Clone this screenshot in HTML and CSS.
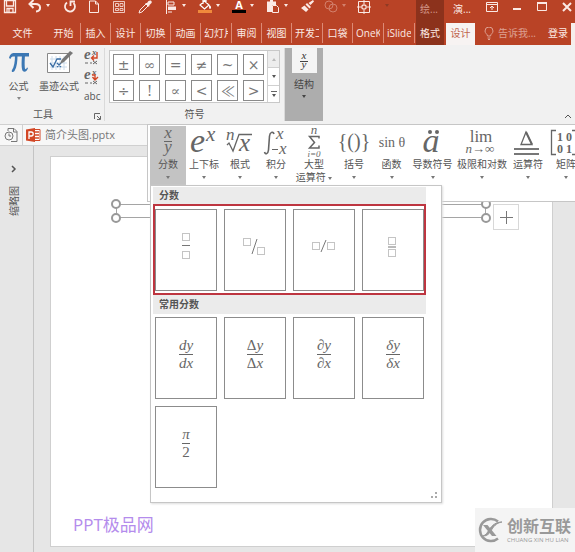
FILE: index.html
```html
<!DOCTYPE html>
<html lang="zh-CN">
<head>
<meta charset="utf-8">
<meta name="viewport" content="width=device-width">
<title>简介头图.pptx</title>
<link rel="stylesheet" href="styles.css">
</head>
<body>
<div class="app">
  <header class="top">
    <div class="quick">
      <button class="q save" aria-label="保存"><svg width="14" height="14" viewBox="0 0 14 14"><path d="M1.500 .5h11v12h-11zM3.500 1v5h7V1M4 12.500v-4h6v4M6 9v3" fill="none" stroke="currentColor" stroke-width="1.300"/></svg></button>
      <button class="q undo" aria-label="撤消"><svg width="14" height="14" viewBox="0 0 14 14"><path d="M5.500 0 1.500 4l4 4M2 4h5.500c6 0 6 7 .5 7.500" fill="none" stroke="currentColor" stroke-width="2"/></svg><i class="caret"></i></button>
      <button class="q redo" aria-label="重复"><svg width="14" height="14" viewBox="0 0 14 14"><path d="M4 2.500a5 5 0 1 0 6.500.5M7.500 6V1.500H12" fill="none" stroke="currentColor" stroke-width="1.800"/></svg></button>
      <button class="q new" aria-label="新建"><svg width="14" height="14" viewBox="0 0 14 14"><path d="M2.500 1h6l3 3v8.500h-9zM8.500 1v3h3" fill="none" stroke="currentColor"/></svg></button>
      <button class="q grid" aria-label="网格"><svg width="14" height="14" viewBox="0 0 14 14"><path d="M1.500 1.500h11v11h-11zM3.500 3.500h3v3h-3zM8 3.500h3v3H8zM3.500 8.500h3v2h-3zM8 8.500h3v2H8z" fill="none" stroke="currentColor" stroke-width=".8"/></svg></button>
      <button class="q pick" aria-label="取色器"><svg width="14" height="14" viewBox="0 0 14 14"><path d="M1 13 2 10l6-6 2 2-6 6z" fill="none" stroke="currentColor"/><path d="m7 3 4 4 .5-2L13.500 3c1-2-1-3.500-3-2L9 3z" fill="currentColor"/></svg></button>
      <button class="q drop" aria-label="对齐"><svg width="14" height="14" viewBox="0 0 14 14"><path d="M2.500 0v14" stroke="currentColor"/><path d="M4 2h6v3H4z" fill="none" stroke="currentColor"/><path d="M4 6.500h8v3.500H4z" fill="currentColor"/><path d="M4 12h4" stroke="currentColor"/></svg><i class="caret"></i></button>
      <button class="q drop" aria-label="填充颜色"><svg width="14" height="14" viewBox="0 0 14 14"><path d="m6.500 1 4.500 4-4.500 4L2 5zM5 4V0h3v3" fill="none" stroke="#fff" stroke-width="1.200"/><path d="M11 5c3 1 2 4 1 4s-1-2-1-4" fill="#fff"/><path d="M0 10h14v3H0z" fill="#f08a3c"/></svg><i class="caret"></i></button>
      <button class="q drop" aria-label="字体颜色"><svg width="14" height="14" viewBox="0 0 14 14"><text x="7" y="9" text-anchor="middle" class="font-a">A</text><path d="M0 10h14v3H0z" fill="#000"/></svg><i class="caret"></i></button>
      <button class="q drop" aria-label="粘贴"><svg width="14" height="14" viewBox="0 0 14 14"><path d="M1 1.500h9V5H6v7H1z" fill="currentColor"/><path d="M4 0h3v2H4z" fill="currentColor"/><path d="M6.500 5.500h4l2 2v5h-6z" fill="#b94326" stroke="currentColor"/></svg><i class="caret"></i></button>
      <button class="q brush" aria-label="格式刷"><svg width="14" height="14" viewBox="0 0 14 14"><path d="m13 0 1 1.500L10.500 5 8.500 3zM7 3l4 4-1.500 1.500-4-4zM4.500 5.500 8.500 9.500 6 12 1 8z" fill="currentColor"/></svg></button>
      <button class="q shapes" disabled aria-label="合并形状"><svg width="14" height="14" viewBox="0 0 14 14"><circle cx="5" cy="5" r="4" fill="none" stroke="currentColor"/><circle cx="9" cy="8" r="4" fill="none" stroke="currentColor"/></svg><i class="caret"></i></button>
      <button class="q crop" aria-label="裁剪"><svg width="14" height="14" viewBox="0 0 14 14"><path d="M1.500 1.500h11v11h-11z" fill="none" stroke="currentColor"/><circle cx="7" cy="7" r="2.200" fill="none" stroke="currentColor" stroke-width="1.200"/><path d="M7 0v4M7 10v4M0 7h4M10 7h4" stroke="currentColor"/></svg></button>
      <button class="q more" aria-label="更多"><i class="caret dim"></i></button>
      <span class="context dark">绘...</span>
      <span class="context title">演...</span>
      <button class="w" aria-label="功能区显示选项"><svg width="12" height="12" viewBox="0 0 12 12"><path d="M.5 1.500h11v9H.5zM.5 3.500h11M6 9V5M4 7l2-2 2 2" fill="none" stroke="currentColor"/></svg></button>
      <button class="w" aria-label="最小化"><svg width="12" height="12" viewBox="0 0 12 12"><path d="M2 8h8" stroke="currentColor" stroke-width="2"/></svg></button>
      <button class="w" aria-label="最大化"><svg width="12" height="12" viewBox="0 0 12 12"><path d="M1.500 1.500h9v8h-9z" fill="none" stroke="currentColor"/><path d="M1 2h10" stroke="currentColor" stroke-width="2"/></svg></button>
      <button class="w" aria-label="关闭"><svg width="12" height="12" viewBox="0 0 12 12"><path d="m2 2 8 8M10 2l-8 8" stroke="currentColor" stroke-width="2"/></svg></button>
    </div>
    <nav class="tabs">
      <a href="#" class="file">文件</a>
      <a href="#" class="home">开始</a>
      <a href="#">插入</a>
      <a href="#">设计</a>
      <a href="#">切换</a>
      <a href="#">动画</a>
      <a href="#" class="cut"><span>幻灯片</span></a>
      <a href="#">审阅</a>
      <a href="#">视图</a>
      <a href="#" class="cut"><span>开发工具</span></a>
      <a href="#">口袋</a>
      <a href="#" class="cut"><span>OneKey</span></a>
      <a href="#" class="cut"><span>iSlide</span></a>
      <a href="#" class="format">格式</a>
      <a href="#" class="active">设计</a>
      <a href="#" class="tell"><svg width="10" height="13" viewBox="0 0 10 13"><path d="M3.500 9C3.500 7 1 6.500 1 4a4 4 0 0 1 8 0c0 2.500-2.500 3-2.500 5zM3.500 11h3M4 12.500h2" fill="none" stroke="currentColor"/></svg>告诉我...</a>
      <a href="#" class="login">登录</a>
      <span class="share"></span>
    </nav>
  </header>

  <section class="ribbon">
    <div class="group tools">
      <div class="body">
        <button class="big eq"><svg width="24" height="26" viewBox="0 0 24 26"><path d="M2 9c1-4 3-5 5-5h15v3.500H7C5 7.500 4 8 3.500 10z" fill="#3c78b4"/><path d="M8 6c0 7-1 12-3 15-1 2 1 3 2.500 1C10 18 10.500 12 10.500 6zM15 6c-.5 7-.5 11 0 14 .5 4 5 3.500 6-1l-1-.5c-1 2.500-2 2-2.200 0-.3-4-.1-8 .2-12.500z" fill="#3c78b4"/></svg><span>公式</span><i class="caret"></i></button>
        <button class="big ink"><svg width="30" height="26" viewBox="0 0 30 26"><path d="M3.500 4.500h22v19h-22z" fill="#fff" stroke="#888"/><path d="M8 7v14M12 7v14M16 7v14M20 7v14M6 10h17M6 14h17M6 18h17" stroke="#cbdcec"/><path d="m6 14 3 4 4-8h4M13 14l4 4M17 14l-4 4" fill="none" stroke="#3a6ea5" stroke-width="1.300"/><path d="m16 15 1.500-4L26 2l3 2-9 9z" fill="#777"/></svg><span>墨迹公式</span></button>
        <div class="mini">
          <button aria-label="专业型"><svg width="16" height="17" viewBox="0 0 16 17"><text x="0" y="11" class="mini-e">e</text><text x="8" y="7" class="mini-x">x</text><path d="M13 4v6H8M10 7.500 7.500 10l2.500 2.500" fill="none" stroke="#d24726" stroke-width="1.400"/><path d="M1 15h3M6 15h2M9 13l4 3M13 13l-4 3" stroke="#666"/></svg></button>
          <button aria-label="线性"><svg width="16" height="17" viewBox="0 0 16 17"><text x="0" y="11" class="mini-e">e</text><text x="8" y="7" class="mini-x">x</text><path d="M8 7h3v4M8.500 9l2.500 3 3-3" fill="none" stroke="#d24726" stroke-width="1.400"/><path d="M1 15h3M6 15h2M9 13l4 3M13 13l-4 3" stroke="#666"/></svg></button>
          <button class="abc">abc</button>
        </div>
      </div>
      <div class="name">工具<svg class="launch" width="7" height="7" viewBox="0 0 7 7"><path d="M.5 6V.5H6M3 3l3 3M6.500 3v3.500H3" fill="none" stroke="#666"/></svg></div>
    </div>
    <div class="group symbols">
      <div class="palette">
        <div class="cells">
          <button>±</button><button>∞</button><button>=</button><button>≠</button><button>~</button><button>×</button>
          <button>÷</button><button>!</button><button>∝</button><button>&lt;</button><button>≪</button><button>&gt;</button>
        </div>
        <div class="scroll">
          <button class="off" aria-label="上一行"><i class="caret up"></i></button>
          <button aria-label="下一行"><i class="caret"></i></button>
          <button class="all" aria-label="其他"><i class="caret"></i></button>
        </div>
      </div>
      <div class="name">符号</div>
    </div>
    <button class="structure"><span class="sample"><svg width="12" height="20" viewBox="0 0 12 20"><text x="6" y="8" text-anchor="middle" class="sx">x</text><path d="M2 10.500h8" stroke="#444"/><text x="6" y="17" text-anchor="middle" class="sx">y</text></svg></span><span>结构</span><i class="caret"></i></button>
    <button class="collapse" aria-label="折叠功能区"><svg width="8" height="6" viewBox="0 0 8 6"><path d="m1 5 3-3 3 3" fill="none" stroke="#555"/></svg></button>
  </section>

  <div class="docs">
    <span class="history"><svg width="14" height="15" viewBox="0 0 14 15"><path d="M4 3V.5h6l3 3V13.500H7" fill="none" stroke="#777"/><path d="M9.500 1v3H13" fill="none" stroke="#777"/><circle cx="5" cy="8" r="4" fill="#f4f4f4" stroke="#777"/><path d="M5 5.500V8h2" fill="none" stroke="#777"/></svg></span>
    <a href="#" class="doc"><svg width="15" height="14" viewBox="0 0 15 14"><path d="M8 1.500h6v11H8z" fill="#fff" stroke="#d24726"/><path d="M9 4h4M9 7h4M9 10h4" stroke="#d24726" stroke-width="1.500"/><path d="m0 1.500 9-1.500v14l-9-1.500z" fill="#d24726"/><path d="M3 11V4h2.200a2 2 0 0 1 0 4H3" fill="none" stroke="#fff" stroke-width="1.300"/></svg>简介头图.pptx</a>
  </div>

  <main class="work">
    <aside class="thumbs"><svg width="6" height="8" viewBox="0 0 6 8"><path d="m1 1 3 3-3 3" fill="none" stroke="#555" stroke-width="1.500"/></svg><span>缩略图</span></aside>
    <div class="stage">
      <div class="slide">
        <div class="shape"><i class="knob tl"></i><i class="knob tr"></i><i class="knob bl"></i><i class="knob br"></i></div>
        <button class="add" aria-label="布局选项"><svg width="13" height="13" viewBox="0 0 13 13"><path d="M6.500 0v13M0 6.500h13" stroke="#777"/></svg></button>
        <p class="brand">PPT极品网</p>
      </div>
    </div>
  </main>

  <div class="gallery">
    <button class="kind on"><svg width="36" height="31" viewBox="0 0 36 31"><text x="18" y="12" text-anchor="middle" class="m17">x</text><path d="M14 15.500h8" stroke="#666"/><text x="18" y="26" text-anchor="middle" class="m17">y</text></svg><span>分数</span><i class="caret"></i></button>
    <button class="kind"><svg width="36" height="31" viewBox="0 0 36 31"><text x="4" y="26" class="m34">e</text><text x="20" y="15" class="m20">x</text></svg><span>上下标</span><i class="caret"></i></button>
    <button class="kind"><svg width="36" height="31" viewBox="0 0 36 31"><text x="4" y="14" class="m17">n</text><path d="m5 19 2-2 4 8L17 8.500h13" fill="none" stroke="#666" stroke-width="1.300"/><text x="17" y="25" class="m26">x</text></svg><span>根式</span><i class="caret"></i></button>
    <button class="kind"><svg width="36" height="31" viewBox="0 0 36 31"><path d="M16 8c-1-3-4-2-4.500 2L10.500 24c-.5 4-3 5-4 2" fill="none" stroke="#666" stroke-width="1.600"/><text x="18" y="13" class="m17">x</text><path d="M14 23.500h6" stroke="#666"/><text x="21" y="28" class="m17">x</text></svg><span>积分</span><i class="caret"></i></button>
    <button class="kind w40 two"><svg width="36" height="31" viewBox="0 0 36 31"><text x="18" y="8" text-anchor="middle" class="m12">n</text><path d="M23 12.500V10.500H13.500l5 6-5 5.500H23v-2.500" fill="none" stroke="#666" stroke-width="1.500"/><text x="18" y="31" text-anchor="middle" class="m10">i=0</text></svg><span>大型</span><span>运算符 <i class="caret"></i></span></button>
    <button class="kind w40"><svg width="36" height="31" viewBox="0 0 36 31"><text x="18" y="22" text-anchor="middle" class="r20">{()}</text></svg><span>括号</span><i class="caret"></i></button>
    <button class="kind w35"><svg width="36" height="31" viewBox="0 0 36 31"><text x="18" y="21" text-anchor="middle" class="r14">sin θ</text></svg><span>函数</span><i class="caret"></i></button>
    <button class="kind w47"><svg width="36" height="31" viewBox="0 0 36 31"><text x="16" y="26" text-anchor="middle" class="m34">a</text><circle cx="15" cy="6" r="2" fill="#666"/><circle cx="22" cy="6" r="2" fill="#666"/></svg><span>导数符号</span><i class="caret"></i></button>
    <button class="kind w52"><svg width="36" height="31" viewBox="0 0 36 31"><text x="17" y="16" text-anchor="middle" class="r17">lim</text><text x="16" y="27" text-anchor="middle" class="m12">n→∞</text></svg><span>极限和对数</span><i class="caret"></i></button>
    <button class="kind w40"><svg width="36" height="31" viewBox="0 0 36 31"><path d="m16 6-5 12.500h11z" fill="none" stroke="#666" stroke-width="1.300"/><path d="m16 6 6 12.500" stroke="#666" stroke-width="2"/><path d="M4 23h25M4 28h25" stroke="#777" stroke-width="2"/></svg><span>运算符</span><i class="caret"></i></button>
    <button class="kind"><svg width="36" height="31" viewBox="0 0 36 31"><path d="M8 4.500H3.500v24H8M24 4.500h4v24h-4" fill="none" stroke="#666" stroke-width="1.300"/><text x="9" y="15" class="bits">1 0</text><text x="9" y="27" class="bits">0 1</text></svg><span>矩阵</span><i class="caret"></i></button>
  </div>

  <div class="menu">
    <h2>分数</h2>
    <div class="cards framed">
      <button aria-label="分数(竖式)"><svg width="30" height="30" viewBox="0 0 30 30"><path d="M11.500 2.500h7v7h-7zM11.500 20.500h7v7h-7z" class="slot"/><path d="M11 14.500h8" class="bar"/></svg></button>
      <button aria-label="分数(斜式)"><svg width="30" height="30" viewBox="0 0 30 30"><path d="M3.500 7.500h7v7h-7zM17.500 16.500h7v7h-7z" class="slot"/><path d="m17 8-5 15" class="bar"/></svg></button>
      <button aria-label="分数(横式)"><svg width="30" height="30" viewBox="0 0 30 30"><path d="M3.500 11.500h7v7h-7zM18.500 11.500h7v7h-7z" class="slot"/><path d="m17 9-5 12" class="bar"/></svg></button>
      <button aria-label="分数(小型)"><svg width="30" height="30" viewBox="0 0 30 30"><path d="M10.500 6.500h7v7h-7zM10.500 18.500h7v7h-7z" class="slot"/><path d="M10 16h8" class="bar"/></svg></button>
    </div>
    <h2>常用分数</h2>
    <div class="cards">
      <button><span class="frac"><span>dy</span><span>dx</span></span></button>
      <button><span class="frac"><span><b>Δ</b>y</span><span><b>Δ</b>x</span></span></button>
      <button><span class="frac"><span>∂y</span><span>∂x</span></span></button>
      <button><span class="frac"><span>δy</span><span>δx</span></span></button>
      <button><span class="frac"><span>π</span><span><b>2</b></span></span></button>
    </div>
    <svg class="grip" width="8" height="8" viewBox="0 0 8 8"><path d="M5 0h2v2H5zM1 4h2v2H1zM5 4h2v2H5z" fill="#aaa"/></svg>
  </div>

  <div class="mark">
    <svg width="26" height="26" viewBox="0 0 26 26"><path d="M21 4.500A11 11 0 1 0 21 21.500" fill="none" stroke="#999" stroke-width="2.500"/><path d="M6 8h4.500l9 11H15z" fill="#999"/><path d="M25 5c-6 1-9 5-11 9-2 3-4 5-8 5 3-1 4-3 6-6 3-5 7-8 13-8z" fill="#999" stroke="#999"/></svg>
    <div><strong>创新互联</strong><small>CHUANG XIN HU LIAN</small></div>
  </div>
</div>
</body>
</html>
```
FILE: styles.css
```css
* { box-sizing: border-box; }
body {
  margin: 0;
  color: #555;
  font: 11px/14px "Open Sans", "Noto Sans CJK SC", sans-serif;
}
button {
  margin: 0;
  padding: 0;
  border: 0;
  background: none;
  color: inherit;
  font: inherit;
}
a { color: inherit; text-decoration: none; }
svg { display: block; flex: none; }
.app {
  position: relative;
  display: flex;
  flex-direction: column;
  min-height: 100vh;
  overflow: hidden;
}
.caret {
  display: inline-block;
  flex: none;
  border: 2px solid transparent;
  border-top: 3px solid currentColor;
  border-bottom: 0;
}
.caret.up { border-top: 0; border-bottom: 3px solid #bbb; }

/* title bar and tabs */
.top { background: #b94326; color: #fbe9e4; }
.quick { display: flex; height: 23px; }
.q, .w {
  display: flex;
  flex: none;
  align-items: flex-start;
  justify-content: center;
  width: 25px;
}
.q .caret { margin: 4px 0 0 4px; }
.save { width: 20px; }
.undo { width: 38px; }
.redo { width: 23px; }
.pick { width: 27px; }
.drop { width: 34px; }
.shapes { width: 32px; color: #d3806c; }
.more { width: 40px; }
.more .caret { margin-right: 22px; }
.dim { color: #8f3a24; }
.font-a { fill: #fff; font: bold 11px "Open Sans", sans-serif; }
.context { flex: none; width: 28px; padding: 2px 0 0 4px; white-space: nowrap; font-size: 10px; }
.dark { background: #8c321c; color: #d3988a; }
.title { width: 35px; flex: 1 0 35px; padding-left: 9px; }
.w { padding-top: 1px; }
.tabs { display: flex; height: 22px; overflow: hidden; font-size: 10px; line-height: 20px; }
.tabs a {
  flex: none;
  width: 30px;
  height: 20px;
  border-right: 1px solid #dc8a76;
  text-align: center;
  white-space: nowrap;
}
.tabs .cut { width: 31px; padding: 0 3px; text-align: left; }
.cut span { display: block; overflow: hidden; }
.tabs .file { width: 45px; border: 0; }
.tabs .home { width: 36px; padding-left: 2px; }
.tabs .format { width: 28px; height: 22px; margin-left: 1px; border: 0; background: #8c321c; }
.tabs .active { width: 29px; height: 22px; margin-left: 2px; border: 0; background: #f7f3f2; color: #c0654e; }
.tabs .tell {
  display: flex;
  flex: 1 0 68px;
  align-items: center;
  gap: 4px;
  padding-left: 9px;
  border: 0;
  color: #dda092;
}
.tabs .login { width: 26px; border: 0; }
.share { width: 4px; background: #f6eeec; }

/* ribbon */
.ribbon { position: relative; display: flex; height: 80px; padding: 3px 0; background: #f1f1f1; border-bottom: 1px solid #d0d0d0; font-size: 10px; }
.group { display: flex; flex-direction: column; justify-content: space-between; flex: none; }
.tools { width: 105px; border-right: 1px solid #dadada; }
.tools .body { display: flex; }
.big { display: flex; flex-direction: column; align-items: center; gap: 4px; height: 56px; }
.big svg { margin-top: 1px; }
.big span { line-height: 14px; white-space: nowrap; }
.big .caret { color: #888; }
.eq { width: 37px; }
.ink { width: 44px; }
.mini { display: flex; flex-direction: column; gap: 3px; margin-left: 3px; }
.mini .abc { line-height: 16px; }
.mini-e { font: italic bold 15px "Liberation Serif", serif; fill: #666; }
.mini-x { font: italic bold 9px "Liberation Serif", serif; fill: #666; }
.name { position: relative; padding-right: 18px; text-align: center; line-height: 14px; }
.launch { position: absolute; right: 3px; bottom: 1px; }
.symbols { width: 180px; padding: 2px 0 0 4px; border-right: 1px solid #dadada; }
.palette { display: flex; width: 171px; height: 53px; border: 1px solid #c8c8c8; background: #fff; }
.cells { display: grid; flex: 1; grid-template-columns: repeat(6, 21px); gap: 5px; padding: 3px; }
.cells button { height: 21px; border: 1px solid #8a8a8a; color: #777; font: 14px/18px "DejaVu Serif", serif; }
.scroll { display: flex; flex-direction: column; width: 13px; border-left: 1px solid #d0d0d0; }
.scroll button { display: flex; flex: 1; align-items: center; justify-content: center; }
.scroll button + button { border-top: 1px solid #d0d0d0; }
.scroll .off { background: #ededed; }
.scroll .all { flex-direction: column; gap: 2px; }
.all::before { width: 6px; height: 1px; background: #666; content: ""; }
.symbols .name { padding-right: 4px; }
.structure { display: flex; flex-direction: column; align-items: center; gap: 4px; width: 38px; height: 73px; background: #adadad; color: #444; }
.sample { display: flex; justify-content: center; width: 25px; height: 25px; padding-top: 3px; background: #f4f4f4; }
.sx { font: italic 11px "Liberation Serif", serif; fill: #333; }
.collapse { margin: auto 3px 2px auto; }

/* open documents */
.docs { display: flex; height: 21px; border-bottom: 1px solid #d0d0d0; background: #f7f7f7; }
.history { display: flex; align-items: center; justify-content: center; width: 23px; border-right: 1px solid #d0d0d0; }
.doc { display: flex; align-items: center; gap: 4px; padding-left: 3px; color: #777; }

/* workspace */
.work { display: flex; flex: 1; background: #e6e6e6; }
.thumbs { display: flex; flex-direction: column; align-items: center; gap: 13px; width: 34px; padding: 19px 6px 0 0; border-right: 1px solid #c4c4c4; }
.thumbs span { writing-mode: vertical-rl; text-orientation: sideways; transform: rotate(180deg); font-size: 10px; }
.stage { display: flex; flex: 1; padding: 10px 22px 5px 16px; }
.slide { position: relative; flex: 1; display: flex; flex-direction: column; justify-content: flex-end; border: 1px solid #cfcfcf; background: #fff; }
.shape { position: absolute; top: 47px; left: 65px; right: 66px; height: 14px; border: 1px solid #a5a5a5; }
.knob { position: absolute; width: 10px; height: 10px; border: 2px solid #999; border-radius: 50%; background: #fff; }
.tl, .bl { left: -6px; }
.tr, .br { right: -6px; }
.tl, .tr { top: -6px; }
.bl, .br { bottom: -6px; }
.add { position: absolute; top: 47px; right: 33px; display: grid; place-items: center; width: 26px; height: 26px; border: 1px solid #d8d8d8; background: #fff; }
.brand { margin: 0; padding: 0 0 8px 22px; color: #b48cec; font-size: 17px; line-height: 26px; }

/* structure gallery */
.gallery {
  position: absolute;
  top: 124px;
  left: 147px;
  right: 0;
  display: flex;
  height: 78px;
  padding: 1px 0 0 2px;
  overflow: hidden;
  border: 1px solid #c6c6c6;
  border-right: 0;
  background: #fff;
  font-size: 10px;
}
.kind { display: flex; flex: none; flex-direction: column; align-items: center; width: 36px; height: 60px; }
.kind span { line-height: 13px; white-space: nowrap; }
.kind svg { margin-bottom: 1px; overflow: visible; }
.kind > .caret { margin-top: 5px; color: #777; }
.kind span .caret { vertical-align: middle; color: #777; }
.on { background: #c3c3c3; }
.w35 { width: 35px; }
.w40 { width: 40px; }
.w47 { width: 47px; }
.w52 { width: 52px; }
.gallery text { fill: #666; }
.m10 { font: italic 9px "Liberation Serif", serif; }
.m12 { font: italic 13px "Liberation Serif", serif; }
.m17 { font: italic 17px "Liberation Serif", serif; }
.m20 { font: italic 21px "Liberation Serif", serif; }
.m26 { font: italic 25px "Liberation Serif", serif; }
.m34 { font: italic 34px "Liberation Serif", serif; }
.r14 { font: 14px "Liberation Serif", serif; }
.r17 { font: 17px "Liberation Serif", serif; }
.r20 { font: 20px "Liberation Serif", serif; }
.bits { font: bold 12px "Liberation Serif", serif; }

/* fraction menu */
.menu {
  position: absolute;
  top: 185px;
  left: 150px;
  width: 292px;
  padding: 1px 15px 14px 2px;
  border: 1px solid #c6c6c6;
  background: #fff;
  box-shadow: 1px 1px 2px #ddd;
}
.menu h2 { margin: 0; padding-left: 6px; background: #ebebeb; color: #555; font-size: 10px; font-weight: 700; line-height: 17px; }
.cards { display: grid; grid-template-columns: repeat(4, 62px); gap: 7px; padding: 3px 2px 0; }
.cards button { display: grid; place-items: center; height: 82px; padding-bottom: 8px; border: 1px solid #8c8c8c; background: #fff; }
.framed { padding: 3px 0 2px; border: 2px solid #bd3540; }
.framed + h2 { line-height: 19px; }
.slot { fill: none; stroke: #888; stroke-dasharray: 1 1; }
.bar { fill: none; stroke: #777; }
.frac { font: italic 15px/17px "Liberation Serif", serif; color: #666; }
.frac > span { display: block; }
.frac > span:first-child { border-bottom: 1px solid #666; }
.frac b { font-style: normal; font-weight: 400; }
.grip { position: absolute; right: 3px; bottom: 2px; }

/* corner logo */
.mark { position: absolute; right: 0; bottom: 0; display: flex; align-items: center; gap: 4px; width: 100px; height: 44px; padding-left: 2px; background: #f4f4f4; color: #999; }
.mark strong, .mark small { display: block; white-space: nowrap; }
.mark strong { font-size: 16px; line-height: 20px; }
.mark small { font-size: 6px; line-height: 8px; }
```
